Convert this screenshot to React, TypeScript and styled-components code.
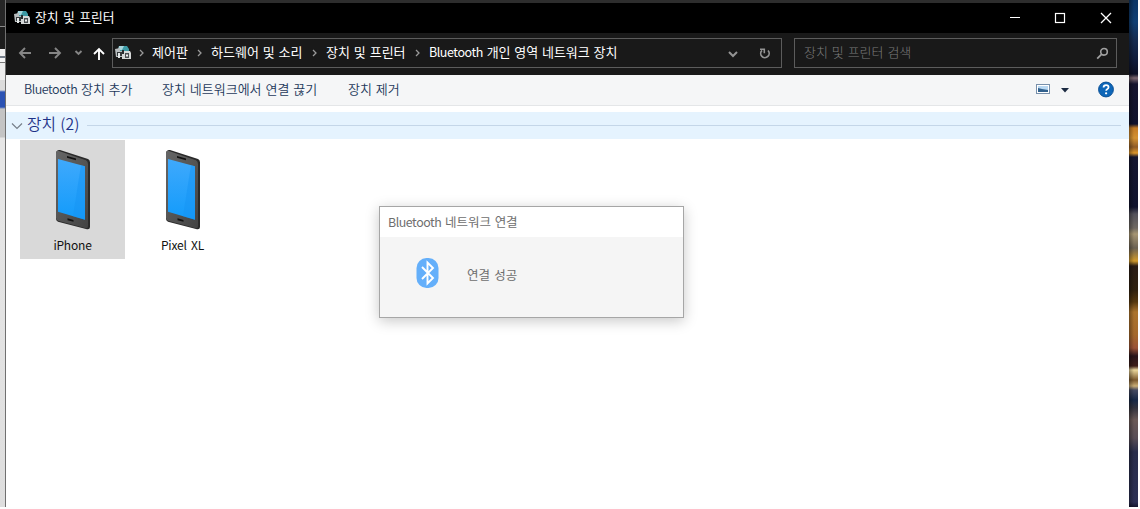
import React from "react";
import styled, { createGlobalStyle } from "styled-components";

const Global = createGlobalStyle`
  * { box-sizing: border-box; }
  body { margin: 0; background: #fefefe; overflow: hidden; }
  svg { display: block; flex: none; }
`;

const Desktop = styled.div`
  width: 1138px;
  height: 507px;
  position: relative;
  display: grid;
  grid-template-columns: 6px 1123px 9px;
  font-family: "Noto Sans CJK KR", "Liberation Sans", sans-serif;
  font-size: 13px;
  line-height: 18px;
  white-space: nowrap;
`;

const LeftSliver = styled.div`
  border-right: 1px solid #707070;
  background: linear-gradient(
    #262626 0 26px, #8a8a8a 26px 27px, #1d1d1d 27px 49px, #f2f2f2 49px 56px,
    #77808c 56px 58px, #f4f4f4 58px 62px, #777 62px 63px, #ededed 63px 80px, #dcdcdc 80px 90px,
    #2b52b4 92px 107px, #c4c4c4 109px 137px, #e6e6e6 138px 200px, #dedede
  );
`;

const RightSliver = styled.div`
  background: linear-gradient(90deg, rgba(0, 0, 0, 0.35), transparent 5px),
    linear-gradient(
      #0b3565 0, #103f73 22px, #152c50 40px, #101c3a 60px, #0c1024 74px, #7c6870 78px,
      #15142e 84px, #10122c 124px, #c47b24 128px, #d39232 138px, #8f5b26 147px, #dc962b 153px,
      #151630 157px, #10132d 207px, #53525a 214px, #6f6961 228px, #a69573 234px, #6b6153 248px,
      #d09a2c 261px, #291c14 266px, #30210f 290px, #56380e 302px, #ab742d 312px, #a4682b 335px,
      #9a5237 348px, #28141a 356px, #3e1d17 366px, #ead69b 370px, #7b592f 380px, #c9ad76 386px,
      #464b61 390px, #172845 400px, #33333d 408px, #6b5a57 420px, #594e57 438px, #292d4b 452px,
      #2b2f53 502px, #13162e 507px
    );
`;

const Window = styled.main`
  display: flex;
  flex-direction: column;
  border-top: 3px solid #2d2d2d;
  background: #fff;
`;

const TitleBar = styled.header`
  height: 30px;
  display: flex;
  align-items: center;
  padding-left: 8px;
  background: #000;
  color: #fff;
`;

const Label = styled.span<{ $word?: number; $letter?: number }>`
  word-spacing: ${(p) => p.$word ?? 1}px;
  letter-spacing: ${(p) => p.$letter ?? 0}px;
`;

const Latin = styled.span`
  font-size: 12.5px;
  letter-spacing: -0.45px;
`;

const TitleText = styled(Label)`
  margin-left: 4px;
  padding-bottom: 2px;
  font-size: 12.8px;
`;

const Controls = styled.div`
  display: flex;
  margin-left: auto;
`;

const NavBar = styled.nav`
  height: 42px;
  display: flex;
  align-items: flex-start;
  padding: 5px 12px 0 12px;
  background: #191919;
`;

const History = styled.div`
  width: 94px;
  height: 30px;
  display: flex;
  align-items: center;
`;

const Field = styled.div<{ $width: number }>`
  width: ${(p) => p.$width}px;
  height: 30px;
  display: flex;
  align-items: center;
  border: 1px solid #5c5c5c;

  ${Label} {
    padding-bottom: 2px;
  }
`;

const Address = styled(Field)`
  padding-left: 2px;
  margin-right: 12px;
  color: #fff;
`;

const Crumb = styled.span<{ $width: number; $gap?: number }>`
  width: ${(p) => p.$width}px;
  display: flex;
  align-items: center;
  gap: ${(p) => p.$gap ?? 9}px;
`;

const AddressActions = styled.div`
  display: flex;
  align-items: center;
  gap: 20px;
  margin-left: auto;
  padding: 1px 9px 0 0;
`;

const Search = styled(Field)`
  justify-content: space-between;
  padding: 0 7px 0 9px;
  color: #7c7c7c;
  font-weight: 300;
`;

const Toolbar = styled.div`
  height: 31px;
  display: flex;
  align-items: center;
  padding: 0 15px 2px 18px;
  background: #f5f6f7;
  border-bottom: 1px solid #e4e6e8;
  color: #1e395b;
  font-weight: 350;
`;

const Command = styled.div<{ $width: number }>`
  width: ${(p) => p.$width}px;
`;

const ToolbarRight = styled.div`
  display: flex;
  align-items: center;
  gap: 1px;
  margin-left: auto;
`;

const GroupHeader = styled.div`
  height: 27px;
  margin-top: 6px;
  display: flex;
  align-items: center;
  padding: 0 8px 0 5px;
  background: #e5f3fe;
  color: #1e3287;
  font-size: 15.7px;
`;

const GroupTitle = styled(Label)`
  margin: 0 8px 0 4px;
  padding-bottom: 3px;
  font-weight: 350;
`;

const Rule = styled.div`
  flex: 1;
  height: 1px;
  background: #c4d6e8;
`;

const Devices = styled.div`
  display: flex;
  gap: 5px;
  padding: 1px 0 0 14px;
`;

const Device = styled.div<{ $selected?: boolean }>`
  width: 105px;
  height: 119px;
  display: flex;
  flex-direction: column;
  align-items: center;
  padding-top: 9px;
  background: ${(p) => (p.$selected ? "#d9d9d9" : "transparent")};
  color: #111;
`;

const DeviceName = styled.span`
  margin-top: 3px;
  font-size: 12px;
  letter-spacing: -0.2px;
  word-spacing: 2px;
`;

const Dialog = styled.section`
  position: absolute;
  left: 379px;
  top: 206px;
  width: 305px;
  height: 112px;
  border: 1px solid #a6a6a6;
  background: #f5f5f5;
  box-shadow: 0 3px 13px rgba(0, 0, 0, 0.22);
  color: #6e6e6e;
  font-size: 12.5px;

  ${Latin} {
    font-size: 12.4px;
  }
`;

const DialogTitle = styled.div`
  height: 30px;
  padding: 6px 8px;
  background: #fff;
`;

const DialogBody = styled.div`
  display: flex;
  align-items: center;
  gap: 28px;
  padding: 20px 0 0 36px;

  ${Label} {
    padding-top: 4px;
  }
`;

const PrinterIcon = () => (
  <svg width="17" height="16" viewBox="0 0 17 16">
    <path d="M4 1h8l2 3v5H3z" fill="#3d9aa5" />
    <path d="M4 1l5 0-2 4H3z" fill="#a7d5dc" />
    <path d="M0 4l5-1v3h5v6H1z" fill="#b8bdbf" />
    <path d="M2 7h5v4H2z" fill="#353a3c" />
    <path d="M3 8h2v5H3z" fill="#e4e8e8" />
    <path d="M7 6h8l1 2v6H7z" fill="#d5d8d8" />
    <path d="M10 8h4v5h-4z" fill="#4a4f52" />
    <path d="M11 9.500h2v2h-2z" fill="#f0f0f0" />
    <path d="M7 5h2v4H7z" fill="#272c2e" />
  </svg>
);

const Separator = () => (
  <svg width="5" height="8" viewBox="0 0 5 8">
    <path d="M1 1l3 3-3 3" fill="none" stroke="#9a9a9a" strokeWidth="1.3" />
  </svg>
);

const Arrow = ({ d, color, width }: { d: string; color: string; width: number }) => (
  <svg width={width} height="14" viewBox={`0 0 ${width} 14`}>
    <path d={d} fill="none" stroke={color} strokeWidth="1.9" />
  </svg>
);

const Phone = ({ id }: { id: string }) => (
  <svg width="42" height="84" viewBox="0 0 42 83" preserveAspectRatio="none">
    <defs>
      <linearGradient id={id} x1="0" y1="0" x2="0" y2="1">
        <stop offset="0" stopColor="#3fa9fc" />
        <stop offset="1" stopColor="#129bfb" />
      </linearGradient>
      <linearGradient id={id + "b"} x1="0" y1="0" x2="1" y2="1">
        <stop offset="0" stopColor="#666" />
        <stop offset="1" stopColor="#434343" />
      </linearGradient>
    </defs>
    <path d="M5 2q1-1.500 3-1l28 9q2 1 2 3v64q0 3-4 2L6 72q-2-1-2-3V4q0-1 1-2" fill="#2a2a2a" />
    <path d="M4 4q0-3 3-2l27 9q2 1 2 4v61q0 3-3 2L6 71q-2-1-2-3z" fill={`url(#${id}b)`} />
    <path d="M6 10l27 7v53L6 62z" fill={`url(#${id})`} />
    <path d="M33 17v53l-12-3.500 8-50.500z" fill="#1594f3" opacity=".5" />
    <path d="M15 7l9 2.500v1.600l-9-2.500zM15.500 68.500l6 1.700v1.800l-6-1.700z" fill="#111" />
  </svg>
);

export default function App() {
  return (
    <>
      <Global />
      <Desktop>
        <LeftSliver />
        <Window>
          <TitleBar>
            <PrinterIcon />
            <TitleText $word={1.6}>장치 및 프린터</TitleText>
            <Controls>
              <svg width="124" height="12" viewBox="0 0 124 12">
                <path d="M5 5.5h10" stroke="#fff" />
                <rect x="50.5" y="1.500" width="9" height="9" fill="none" stroke="#fff" strokeWidth="1.2" />
                <path d="M96 1l10 10M106 1l-10 10" stroke="#fff" strokeWidth="1.3" />
              </svg>
            </Controls>
          </TitleBar>
          <NavBar>
            <History>
              <Arrow width={30} color="#858585" d="M13 7H2M7 2L2 7l5 5" />
              <Arrow width={26} color="#858585" d="M1 7h11M7 2l5 5-5 5" />
              <Arrow width={18} color="#858585" d="M1.5 5l3 3 3-3" />
              <Arrow width={14} color="#fff" d="M7 14V3M2 8l5-5 5 5" />
            </History>
            <Address $width={670}>
              <Crumb $width={37} $gap={7}>
                <PrinterIcon />
                <Separator />
              </Crumb>
              <Crumb $width={59}>
                <Label>제어판</Label>
                <Separator />
              </Crumb>
              <Crumb $width={115}>
                <Label>하드웨어 및 소리</Label>
                <Separator />
              </Crumb>
              <Crumb $width={103}>
                <Label>장치 및 프린터</Label>
                <Separator />
              </Crumb>
              <Label $letter={-0.05}>
                <Latin>Bluetooth</Latin> 개인 영역 네트워크 장치
              </Label>
              <AddressActions>
                <svg width="10" height="8" viewBox="0 0 10 8">
                  <path d="M1 2l4 4 4-4" fill="none" stroke="#949494" strokeWidth="2" />
                </svg>
                <svg width="14" height="14" viewBox="0 0 14 14">
                  <path d="M10 3.5A4.2 4.2 0 1 1 4 3.4" fill="none" stroke="#949494" strokeWidth="1.7" />
                  <path d="M2 2.2h4.3v4" fill="none" stroke="#949494" strokeWidth="1.6" />
                </svg>
              </AddressActions>
            </Address>
            <Search $width={323}>
              <Label>장치 및 프린터 검색</Label>
              <svg width="13" height="13" viewBox="0 0 13 13">
                <circle cx="8" cy="4.8" r="3.3" fill="none" stroke="#a0a0a0" strokeWidth="1.6" />
                <path d="M5.7 7.2L1.2 11.7" stroke="#a0a0a0" strokeWidth="1.8" />
              </svg>
            </Search>
          </NavBar>
          <Toolbar>
            <Command $width={138}>
              <Label $word={1} $letter={-0.1}>
                <Latin>Bluetooth</Latin> 장치 추가
              </Label>
            </Command>
            <Command $width={186}>
              <Label $word={1}>장치 네트워크에서 연결 끊기</Label>
            </Command>
            <Label>장치 제거</Label>
            <ToolbarRight>
              <svg width="61" height="16" viewBox="0 0 61 16">
                <rect x=".5" y="3.500" width="13" height="9" fill="#fff" stroke="#7890ab" />
                <path d="M2 5h10v6H2z" fill="#b9d8f2" />
                <path d="M2 7l4 1 6 1v2H2z" fill="#31618e" />
                <path d="M25 7h8l-4 4.500z" fill="#1b2b42" />
              </svg>
              <svg width="16" height="17" viewBox="0 0 17 17">
                <circle cx="8.500" cy="8.500" r="7.900" fill="#0d66b8" stroke="#084d92" />
                <path d="M5.900 6.500q0-2.600 2.700-2.600 2.600 0 2.600 2.200 0 1.300-1.500 2.100-1 .6-1 1.700" fill="none" stroke="#fff" strokeWidth="1.900" />
                <circle cx="8.600" cy="12.500" r="1.200" fill="#fff" />
              </svg>
            </ToolbarRight>
          </Toolbar>
          <GroupHeader>
            <svg width="12" height="10" viewBox="0 0 12 10">
              <path d="M1 2.500l5 5 5-5" fill="none" stroke="#767f89" strokeWidth="1.200" />
            </svg>
            <GroupTitle $word={1}>장치 (2)</GroupTitle>
            <Rule />
          </GroupHeader>
          <Devices>
            <Device $selected>
              <Phone id="p1" />
              <DeviceName>iPhone</DeviceName>
            </Device>
            <Device>
              <Phone id="p2" />
              <DeviceName>Pixel XL</DeviceName>
            </Device>
          </Devices>
        </Window>
        <RightSliver />
        <Dialog>
          <DialogTitle>
            <Label $letter={-0.05}>
              <Latin>Bluetooth</Latin> 네트워크 연결
            </Label>
          </DialogTitle>
          <DialogBody>
            <svg width="23" height="32" viewBox="0 0 23 32">
              <rect x=".5" y="1" width="22" height="30" rx="10" fill="#64affa" />
              <path d="M6 10l11 11-5.500 5.500v-21L17 11 6 22" fill="none" stroke="#fff" strokeWidth="1.900" />
            </svg>
            <Label $word={1.4}>연결 성공</Label>
          </DialogBody>
        </Dialog>
      </Desktop>
    </>
  );
}
